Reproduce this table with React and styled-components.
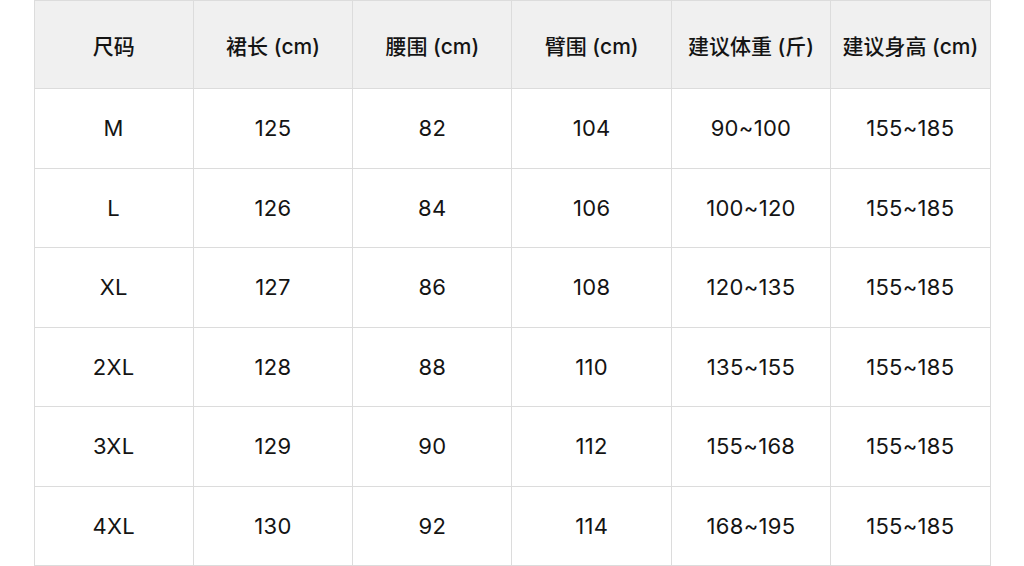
import React from "react";
import styled, { createGlobalStyle } from "styled-components";

const line = `#dcdcdc`;
const headBg = `#f0f0f0`;
const ink = `#141414`;

const GlobalStyle = createGlobalStyle`
  html, body { margin: 0; padding: 0; background: #fff; }
  body {
    font-family: Inter, "Noto Sans CJK SC", sans-serif;
    color: ${ink};
  }
`;

const Page = styled.div`
  display: flex;
  justify-content: center;
  height: 566px;
  overflow: hidden;
`;

const Table = styled.table`
  width: 957px;
  height: 566px;
  border-collapse: collapse;
  table-layout: fixed;
`;

const HeadCell = styled.th`
  height: 87px;
  background: ${headBg};
  border: 1px solid ${line};
  font-size: 21px;
  font-weight: 500;
  text-align: center;
  padding: 0;
  white-space: nowrap;
`;

const Cell = styled.td`
  height: 78px;
  border: 1px solid ${line};
  font-size: 22px;
  font-weight: 400;
  letter-spacing: 0.3px;
  text-align: center;
  padding: 0;
`;

const headers = [
  "尺码",
  "裙长 (cm)",
  "腰围 (cm)",
  "臂围 (cm)",
  "建议体重 (斤)",
  "建议身高 (cm)",
];

const rows = [
  ["M", "125", "82", "104", "90~100", "155~185"],
  ["L", "126", "84", "106", "100~120", "155~185"],
  ["XL", "127", "86", "108", "120~135", "155~185"],
  ["2XL", "128", "88", "110", "135~155", "155~185"],
  ["3XL", "129", "90", "112", "155~168", "155~185"],
  ["4XL", "130", "92", "114", "168~195", "155~185"],
];

const App = () => (
  <>
    <GlobalStyle />
    <Page>
      <Table>
        <thead>
          <tr>
            {headers.map((h) => (
              <HeadCell key={h}>{h}</HeadCell>
            ))}
          </tr>
        </thead>
        <tbody>
          {rows.map((r) => (
            <tr key={r[0]}>
              {r.map((v, i) => (
                <Cell key={i}>{v}</Cell>
              ))}
            </tr>
          ))}
        </tbody>
      </Table>
    </Page>
  </>
);

export default App;
